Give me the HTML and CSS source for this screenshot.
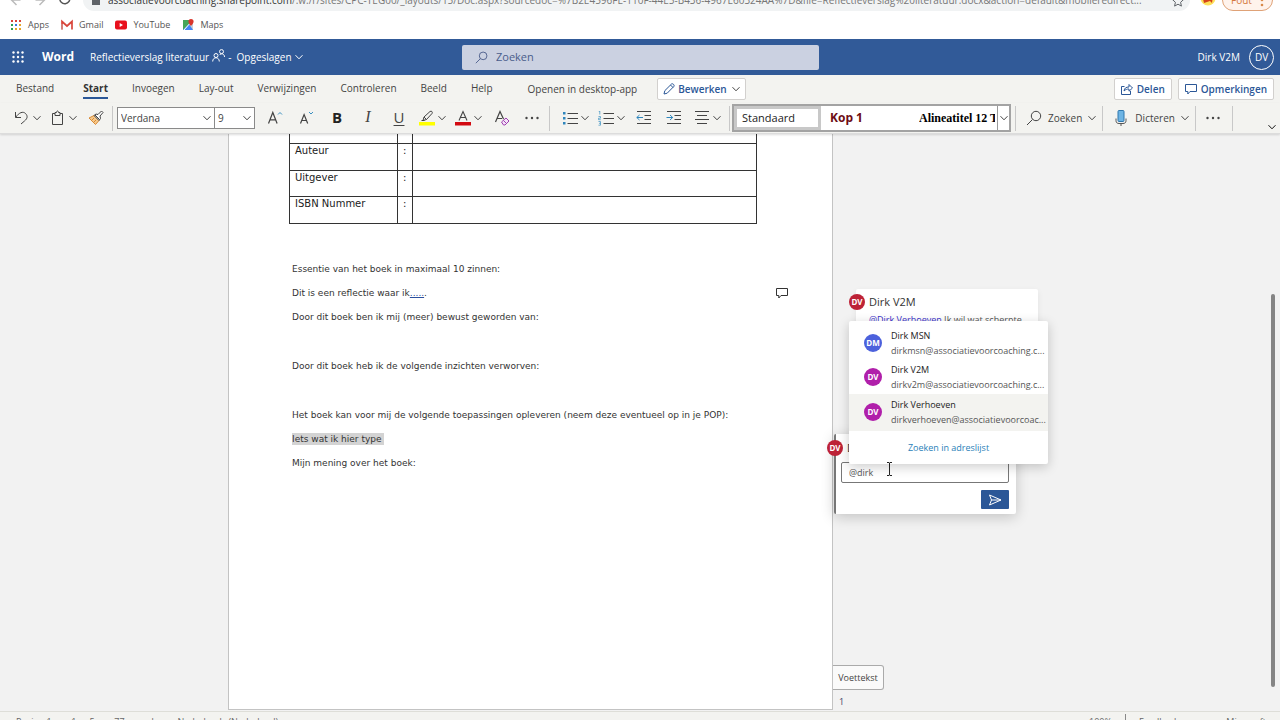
FILE: index.html
```html
<!DOCTYPE html>
<html lang="nl">
<head>
<meta charset="utf-8">
<title>Reflectieverslag literatuur - Word</title>
<link rel="stylesheet" href="styles.css">
</head>
<body>
<svg class="defs" aria-hidden="true">
  <symbol id="chev" viewBox="0 0 8 8"><path d="M.5 2.2 4 5.8 7.5 2.2" fill="none" stroke="currentColor"/></symbol>
  <symbol id="bubble" viewBox="0 0 12 12"><path d="M.5 1.5h11v7H5L2.8 11V8.500H.5z" fill="none" stroke="currentColor"/></symbol>
  <symbol id="lens" viewBox="0 0 16 16"><g fill="none" stroke="currentColor"><circle cx="10" cy="6" r="4.700"/><path d="M6.500 9.500 1 15"/></g></symbol>
  <symbol id="dots" viewBox="0 0 16 4"><g fill="currentColor"><circle cx="2.500" cy="2" r="1.200"/><circle cx="8" cy="2" r="1.200"/><circle cx="13.500" cy="2" r="1.200"/></g></symbol>
</svg>

<div class="browser">
  <div class="address-row">
    <svg class="nav-icon" viewBox="0 0 60 14"><g fill="none" stroke-width="1.500"><path d="M10 7H1M5 2 1 7l5 5" stroke="#bbb"/><path d="M25 7h9M30 2l4 5-5 5" stroke="#bbb"/><path d="M59 4a5 5 0 1 1-3-3" stroke="#555"/></g></svg>
    <div class="address">
      <svg class="lock" viewBox="0 0 8 10"><path d="M0 4h8v6H0zM2 4V1h4v3" fill="#5f6368"/></svg>
      <span class="url"><b>associatievoorcoaching.sharepoint.com</b>/:w:/r/sites/CPC-TEG00/_layouts/15/Doc.aspx?sourcedoc=%7B2E4596FE-110F-44E5-B436-4967E60324AA%7D&amp;file=Reflectieverslag%20literatuur.docx&amp;action=default&amp;mobileredirect...</span>
      <svg class="star" viewBox="0 0 12 12"><path d="m6 .8 1.600 3.500 3.800.4-2.800 2.600.8 3.800L6 9.200l-3.400 1.900.8-3.800L.6 4.700l3.800-.4z" fill="none" stroke="#5f6368"/></svg>
    </div>
    <svg class="ext" viewBox="0 0 16 14"><circle cx="8" cy="6" r="7.500" fill="#fde05a"/><path d="M2 3l4 3 7-2-1 7-2-2-3 1-3 1z" fill="#d4421a"/></svg>
    <button class="error-btn">Fout<svg viewBox="0 0 4 14"><g fill="#d98a4a"><circle cx="2" cy="2" r="1.300"/><circle cx="2" cy="7" r="1.300"/><circle cx="2" cy="12" r="1.300"/></g></svg></button>
  </div>
  <nav class="bookmarks">
    <a href="#"><svg viewBox="0 0 12 12"><g fill="#d9453a"><path d="M1 1h2v2H1z"/><path d="M5 1h2v2H5zM9 1h2v2H9z"/></g><path d="M1 5h2v2H1zM1 9h2v2H1z" fill="#2f9e4f"/><path d="M5 5h2v2H5z" fill="#3b78e0"/><path d="M9 5h2v2H9zM5 9h2v2H5zM9 9h2v2H9z" fill="#e5a52a"/></svg>Apps</a>
    <a href="#"><svg viewBox="0 0 12 12"><path d="M1 10.500v-8l5 4.500 5-4.500v8" fill="none" stroke="#d9453a" stroke-width="1.700"/><path d="M1 5v5.500" stroke="#c9a0a0" stroke-width="1"/></svg>Gmail</a>
    <a href="#"><svg viewBox="0 0 12 12"><rect y="1.500" width="12" height="9" rx="2" fill="#e8101c"/><path d="M4.700 4v4L8 6z" fill="#fff"/></svg>YouTube</a>
    <a href="#"><svg viewBox="0 0 12 12"><path d="M1 1h10v10H1z" fill="#45a558"/><path d="M1 11 11 2v9z" fill="#c9d0d8"/><path d="M1 11 7 5l4 6z" fill="#4285f4"/><path d="m2 11 8-9" stroke="#fff"/><path d="M9 0a2.600 2.600 0 0 1 2.600 2.600C11.600 4.500 9 7 9 7S6.400 4.500 6.400 2.600A2.600 2.600 0 0 1 9 0z" fill="#d9352b"/></svg>Maps</a>
  </nav>
</div>

<header class="titlebar">
  <button class="waffle" aria-label="Apps"><svg viewBox="0 0 14 14"><g fill="#fff"><circle cx="2.500" cy="2.500" r="1.200"/><circle cx="7" cy="2.500" r="1.200"/><circle cx="11.500" cy="2.500" r="1.200"/><circle cx="2.500" cy="7" r="1.200"/><circle cx="7" cy="7" r="1.200"/><circle cx="11.500" cy="7" r="1.200"/><circle cx="2.500" cy="11.500" r="1.200"/><circle cx="7" cy="11.500" r="1.200"/><circle cx="11.500" cy="11.500" r="1.200"/></g></svg></button>
  <span class="app">Word</span>
  <button class="doc-name">Reflectieverslag literatuur
    <svg class="people" viewBox="0 0 13 13"><g fill="none" stroke="#fff"><circle cx="4" cy="6.500" r="2"/><path d="M.7 12.500C.7 7.500 7.300 7.500 7.300 12.500"/><circle cx="9.500" cy="2.600" r="2"/><path d="M7.500 6C9 4 12.500 4.500 12.500 8"/></g></svg>
    <span>-&nbsp; Opgeslagen</span><svg class="chev"><use href="#chev"/></svg></button>
  <label class="search"><svg><use href="#lens"/></svg><input type="text" placeholder="Zoeken" aria-label="Zoeken"></label>
  <div class="account"><span>Dirk V2M</span><button class="me">DV</button></div>
</header>

<div class="tabs">
  <nav class="tab-list">
    <button>Bestand</button><button class="active">Start</button><button>Invoegen</button><button>Lay-out</button><button>Verwijzingen</button><button>Controleren</button><button>Beeld</button><button>Help</button>
  </nav>
  <button class="open-app">Openen in desktop-app</button>
  <button class="pill bold"><svg viewBox="0 0 12 12"><path d="m1 11 .8-3.300L8.500 1c1-1 3.400 1 2.400 2.400L4.200 10.200zM7.500 2l2.500 2.500" fill="none" stroke="currentColor"/></svg>Bewerken<svg class="chev"><use href="#chev"/></svg></button>
  <div class="tab-actions">
    <button class="pill"><svg viewBox="0 0 12 12"><path d="M3.500 3.500h-3v8h9V8M3 8c.5-3 2-4 5-4V1.500L11.500 5 8 8.200V6C6 6 4.500 6.500 3 8z" fill="none" stroke="currentColor"/></svg>Delen</button>
    <button class="pill"><svg><use href="#bubble"/></svg>Opmerkingen</button>
  </div>
</div>

<div class="toolbar">
  <button class="split" aria-label="Ongedaan maken"><svg class="ico" viewBox="0 0 16 16"><path d="M1.500 2v5.500H7M1.800 7.200C5 2.500 9 1 11.500 3.500s2 5-1 7.500L7 14" fill="none" stroke="currentColor"/></svg><svg class="chev"><use href="#chev"/></svg></button>
  <button class="split" aria-label="Plakken"><svg class="ico" viewBox="0 0 16 16"><path d="M5 3.500H2.500v11h10v-11H10M5 2.500h1.500c0-2 2-2 2 0H10v3H5z" fill="none" stroke="currentColor"/></svg><svg class="chev"><use href="#chev"/></svg></button>
  <button class="tool narrow" aria-label="Opmaak kopiëren"><svg class="ico" viewBox="0 0 16 16"><path d="M1 8 6 5.500l5 5L7.500 14.500z" fill="#f6c98c" stroke="#d98a35"/><path d="M3.500 10.500 6 8M5.500 12.500 8 10" stroke="#d98a35"/><path d="m6 5.500 2-1.500 2 .5L13.500 1 15 2.500 12 6l.5 2.500-1.500 2z" fill="#fff" stroke="#444"/><path d="m7 5 4.500 4.500" stroke="#444"/></svg></button>
  <span class="sep"></span>
  <div class="fonts">
    <label class="combo family"><select aria-label="Lettertype"><option>Verdana</option></select><svg class="chev"><use href="#chev"/></svg></label>
    <label class="combo size"><select aria-label="Tekengrootte"><option>9</option></select><svg class="chev"><use href="#chev"/></svg></label>
  </div>
  <button class="tool" aria-label="Groter"><svg class="ico" viewBox="0 0 16 16"><g fill="none" stroke="currentColor" stroke-width="1.200"><path d="m1.500 13.500 4.300-11 4.300 11M3 9.800h5.600"/></g><path d="m11 4.500 2-2 2 2" fill="none" stroke="#3a8fc0"/></svg></button>
  <button class="tool" aria-label="Kleiner"><svg class="ico" viewBox="0 0 16 16"><g fill="none" stroke="currentColor" stroke-width="1.200"><path d="m2.500 13.500 3.600-9 3.600 9M3.800 10.500h4.600"/></g><path d="m11 2 2 2 2-2" fill="none" stroke="#3a8fc0"/></svg></button>
  <button class="tool letter strong">B</button>
  <button class="tool letter italic">I</button>
  <button class="tool letter under">U</button>
  <button class="split" aria-label="Markeren"><svg class="ico" viewBox="0 0 16 16"><path d="M0 12h16v3.500H0z" fill="#ff0"/><path d="m4 10.500 1-3.500L11 1.500c1.500-1 3 .5 2 2L7.500 9.500zM5 7l2.500 2.500M2.500 10.500h3" fill="none" stroke="currentColor"/></svg><svg class="chev"><use href="#chev"/></svg></button>
  <button class="split" aria-label="Tekstkleur"><svg class="ico" viewBox="0 0 16 16"><path d="M0 12h16v3.500H0z" fill="#d20a11"/><path d="m4 10.500 4-9 4 9M5.200 7.500h5.600" fill="none" stroke="currentColor" stroke-width="1.100"/></svg><svg class="chev"><use href="#chev"/></svg></button>
  <button class="tool" aria-label="Opmaak wissen"><svg class="ico" viewBox="0 0 16 16"><path d="M1.500 12 6 1.500 9.500 9M3 8.500h5" fill="none" stroke="currentColor" stroke-width="1.200"/><path d="m7.500 12 4.500-4 3 3-4 4H9.500zM9.500 10.500l3 3" fill="#f4e3f8" stroke="#a040b0"/></svg></button>
  <button class="tool narrow" aria-label="Meer"><svg class="more"><use href="#dots"/></svg></button>
  <span class="sep wide"></span>
  <button class="split" aria-label="Opsommingstekens"><svg class="ico" viewBox="0 0 16 16"><path d="M5.500 3.500H16M5.500 8.500H16M5.500 13.500H16" stroke="currentColor"/><path d="M1 2h2.500v2.500H1zM1 7h2.500v2.500H1zM1 12h2.500v2.500H1z" fill="#2f86bd"/></svg><svg class="chev"><use href="#chev"/></svg></button>
  <button class="split" aria-label="Nummering"><svg class="ico" viewBox="0 0 16 16"><path d="M5.500 3.500H16M5.500 8.500H16M5.500 13.500H16" stroke="currentColor"/><path d="m.8 2 1-1v3.500M.5 6.500h2v1.700h-2v1.500h2.300M.5 11.500h2v3.700h-2M1 13.300h1.500" fill="none" stroke="#4d9bc8" stroke-width=".8"/></svg><svg class="chev"><use href="#chev"/></svg></button>
  <button class="tool narrow" aria-label="Inspringing verkleinen"><svg class="ico" viewBox="0 0 16 16"><path d="M1 1.500h14M8.500 5.500H15M8.500 9.500H15M1 13.500h14" stroke="currentColor"/><path d="M7 7.500H.8M3.500 5 .8 7.500 3.500 10" fill="none" stroke="#2f86bd"/></svg></button>
  <button class="tool" aria-label="Inspringing vergroten"><svg class="ico" viewBox="0 0 16 16"><path d="M1 1.500h14M8.500 5.500H15M8.500 9.500H15M1 13.500h14" stroke="currentColor"/><path d="M.5 7.500h6.200M4 5l2.700 2.500L4 10" fill="none" stroke="#2f86bd"/></svg></button>
  <button class="split" aria-label="Uitlijnen"><svg class="ico" viewBox="0 0 16 16"><path d="M1 1.500h14M3 5.500h10M1 9.500h14M3 13.500h10" stroke="currentColor"/></svg><svg class="chev"><use href="#chev"/></svg></button>
  <span class="sep spaced"></span>
  <div class="gallery">
    <button class="style-normal">Standaard</button>
    <button class="style-head">Kop 1</button>
    <button class="style-title">Alineatitel 12 TNR</button>
    <button class="gallery-more" aria-label="Meer stijlen"><svg class="chev"><use href="#chev"/></svg></button>
  </div>
  <span class="sep spaced"></span>
  <button class="text-tool"><svg class="ico"><use href="#lens"/></svg>Zoeken<svg class="chev"><use href="#chev"/></svg></button>
  <span class="sep"></span>
  <button class="text-tool"><svg class="ico" viewBox="0 0 16 16"><rect x="5" y=".5" width="6" height="11" rx="1" fill="#6db4e4" stroke="#2f77ad"/><path d="M3 8.500v2c0 2 1 3 3 3h4c2 0 3-1 3-3v-2M8 13.500V16" fill="none" stroke="#555"/></svg>Dicteren<svg class="chev"><use href="#chev"/></svg></button>
  <span class="sep"></span>
  <button class="tool" aria-label="Meer opties"><svg class="more"><use href="#dots"/></svg></button>
  <span class="sep spaced"></span>
  <button class="collapse" aria-label="Lint"><svg class="chev"><use href="#chev"/></svg></button>
</div>

<main class="workspace">
  <article class="page">
    <table>
      <tr><th></th><td></td><td></td></tr>
      <tr><th>Auteur</th><td>:</td><td></td></tr>
      <tr><th>Uitgever</th><td>:</td><td></td></tr>
      <tr><th>ISBN Nummer</th><td>:</td><td></td></tr>
    </table>
    <div class="prose">
      <p>Essentie van het boek in maximaal 10 zinnen:</p>
      <p class="noted"><span>Dit is een reflectie waar ik<u>.....</u>.</span><svg class="note"><use href="#bubble"/></svg></p>
      <p>Door dit boek ben ik mij (meer) bewust geworden van:</p>
      <p class="blank"></p>
      <p>Door dit boek heb ik de volgende inzichten verworven:</p>
      <p class="blank"></p>
      <p>Het boek kan voor mij de volgende toepassingen opleveren (neem deze eventueel op in je POP):</p>
      <p><mark>Iets wat ik hier type</mark></p>
      <p>Mijn mening over het boek:</p>
    </div>
  </article>
  <aside class="side">
    <section class="card first">
      <span class="avatar red">DV</span>
      <div><h2>Dirk V2M</h2><p><a href="#">@Dirk Verhoeven</a> Ik wil wat scherpte</p></div>
    </section>
    <section class="card second">
      <div class="card-head"><span class="avatar red">DV</span><h2>Dirk V2M</h2></div>
      <input type="text" value="@dirk" aria-label="Opmerking">
      <button class="send" aria-label="Verzenden"><svg viewBox="0 0 14 12"><path d="M1.500 1 13 6 1.500 11l2-5zM3.500 6H13" fill="none" stroke="#fff"/></svg></button>
    </section>
    <div class="suggest">
      <button class="person"><span class="avatar blue">DM</span><span class="who"><strong>Dirk MSN</strong><span>dirkmsn@associatievoorcoaching.c...</span></span></button>
      <button class="person"><span class="avatar purple">DV</span><span class="who"><strong>Dirk V2M</strong><span>dirkv2m@associatievoorcoaching.c...</span></span></button>
      <button class="person hover"><span class="avatar purple">DV</span><span class="who"><strong>Dirk Verhoeven</strong><span>dirkverhoeven@associatievoorcoac...</span></span></button>
      <a class="lookup" href="#">Zoeken in adreslijst</a>
    </div>
    <svg class="caret" viewBox="0 0 7 14"><path d="M1 .5h2l.5.5.5-.5h2M3.500 1v12M1 13.500h2l.5-.5.5.5h2" fill="none" stroke="#222"/></svg>
    <div class="footer-tag"><button>Voettekst</button><span>1</span></div>
  </aside>
  <div class="scroll-thumb"></div>
</main>

<footer class="status">
  <div><span>Pagina 1 van 1</span><span>5 van 77 woorden</span><span>Nederlands (Nederland)</span></div>
  <div><span>100%</span><i></i><span>Feedback geven aan Microsoft</span></div>
</footer>
</body>
</html>
```
FILE: styles.css
```css
* { box-sizing: border-box; }
body {
  margin: 0; height: 100vh; overflow: hidden;
  display: flex; flex-direction: column;
  font: 10px/16px "Open Sans", "Noto Sans", sans-serif;
  color: #444; background: #f2f2f2;
}
button, input, select {
  font: inherit; color: inherit; background: none; border: 0;
  padding: 0; margin: 0; border-radius: 0; outline: 0; white-space: nowrap;
}
button { display: flex; align-items: center; justify-content: center; flex: none; }
a { text-decoration: none; color: inherit; }
svg { flex: none; display: block; }
h2, p { margin: 0; font-weight: 400; }
.defs { position: absolute; width: 0; height: 0; }
.chev { width: 8px; height: 8px; }

.browser { background: #fff; flex: none; }
.address-row { height: 11px; overflow: hidden; display: flex; align-items: flex-end; padding: 0 7px 0 10px; }
.nav-icon { width: 61px; height: 14px; margin-bottom: 4px; }
.address {
  flex: 1; min-width: 0; height: 22px; margin-left: 12px; padding: 0 6px 0 9px;
  background: #f1f3f4; border-radius: 11px; display: flex; align-items: center; color: #777;
}
.lock { width: 8px; height: 10px; margin-right: 8px; }
.url { flex: 1; min-width: 0; overflow: hidden; white-space: nowrap; }
.url b { font-weight: 400; color: #333; }
.star { width: 12px; height: 12px; margin: 2px 0 0 12px; }
.ext { width: 16px; height: 14px; margin: 0 6px 5px 10px; }
.error-btn {
  width: 51px; height: 22px; gap: 8px; color: #d5793c;
  border: 1px solid #dfa277; border-radius: 11px; background: #fff3ec;
}
.error-btn svg { width: 4px; height: 14px; }
.bookmarks { height: 28px; display: flex; align-items: center; gap: 12px; padding: 0 10px 1px; font-size: 9px; color: #555; }
.bookmarks a { display: flex; align-items: center; gap: 6px; }
.bookmarks svg { width: 12px; height: 12px; }

.titlebar { height: 36px; flex: none; background: #315a98; color: #fff; display: grid; grid-template-columns: 36px 54px 372px minmax(100px, 357px) 1fr; align-items: center; }
.waffle svg { width: 14px; height: 14px; }
.app { font-size: 12px; font-weight: 700; padding-left: 6px; }
.doc-name { justify-content: flex-start; gap: 3px; }
.people { width: 13px; height: 13px; margin-bottom: 4px; }
.search { height: 25px; display: flex; align-items: center; gap: 8px; padding: 0 13px; background: #cbd1e1; border-radius: 2px; color: #3c4f80; }
.search svg { width: 13px; height: 13px; }
.search input { flex: 1; min-width: 0; font-size: 11px; }
.search input::placeholder { color: #4a5d8b; opacity: 1; }
.account { display: flex; justify-content: flex-end; align-items: center; gap: 9px; padding-right: 6px; }
.me { width: 25px; height: 25px; border: 1px solid #fff; border-radius: 50%; }

.tabs { height: 28px; flex: none; background: #f3f3f0; display: flex; align-items: flex-start; padding: 3px 6px 0 16px; }
.tab-list { display: flex; gap: 24px; }
.tab-list button { height: 21px; padding-bottom: 2px; }
.tab-list .active { margin-left: 5px; font-weight: 700; color: #333; border-bottom: 2px solid #2b5797; padding-bottom: 0; }
.open-app { margin: 3px 20px 0 35px; }
.pill { height: 22px; padding: 0 6px; gap: 4px; background: #fff; border: 1px solid #d2d0ce; border-radius: 2px; color: #2b5797; font-weight: 600; }
.pill.bold { padding: 0 5px; gap: 3px; }
.pill svg { width: 12px; height: 12px; }
.pill .chev { width: 8px; height: 8px; margin-left: 2px; color: #444; }
.tab-actions { margin-left: auto; display: flex; gap: 6px; }

.toolbar { height: 31px; flex: none; background: #f3f3f0; display: flex; align-items: center; gap: 1px; padding: 0 4px 0 10px; border-bottom: 1px solid #dcdcdc; box-shadow: 0 1px 2px #0002; z-index: 1; }
.ico { width: 16px; height: 16px; }
.split { width: 35px; gap: 3px; }
.tool { width: 30px; height: 28px; }
.tool.narrow { width: 28px; }
.more { width: 16px; height: 4px; }
.sep { width: 1px; height: 25px; margin: 0 1px; background: #c8c8c8; flex: none; }
.sep.wide { margin: 0 7px 0 2px; }
.sep.spaced { margin: 0 1px 0 3px; }
.fonts { display: flex; height: 22px; margin: 0 4px 0 2px; flex: none; }
.combo { display: flex; align-items: center; border: 1px solid #8a8a8a; background: #fff; padding: 0 3px; }
.combo select { flex: 1; min-width: 0; appearance: none; }
.family { width: 98px; }
.size { width: 40px; border-left: 0; padding-left: 3px; }
.letter { font-size: 15px; padding-bottom: 2px; }
.strong { font-weight: 700; color: #222; }
.italic { font-family: "Liberation Serif", serif; font-style: italic; font-size: 16px; }
.under { text-decoration: underline; text-underline-offset: 2px; text-decoration-thickness: 1px; }
.gallery { width: 279px; height: 28px; flex: 0 1 auto; min-width: 100px; display: flex; border: 2px solid #a3a3a3; background: #fff; overflow: hidden; color: #222; }
.style-normal { width: 87px; border: 3px solid #c8c8c8; font-size: 11px; justify-content: flex-start; padding-left: 5px; }
.style-head { width: 98px; justify-content: flex-start; padding-left: 9px; font-size: 12px; font-weight: 700; color: #6d0c14; }
.style-title { flex: 1; min-width: 0; overflow: hidden; justify-content: flex-start; font: bold 12px/16px "Liberation Serif", serif; color: #000; }
.gallery-more { width: 12px; margin-left: 2px; border-left: 1px solid #999; color: #444; }
.text-tool { padding: 0 4px 0 8px; gap: 6px; }
.collapse { margin: 18px 0 0 auto; color: #111; }

.workspace { position: relative; flex: 1; min-height: 0; display: grid; grid-template-columns: 228fr 605fr 447fr; padding-bottom: 1px; }
.page { grid-column: 2; background: #fff; border: 1px solid #c3c3c3; border-top: 0; overflow: hidden; font-family: "DejaVu Sans", sans-serif; font-size: 9px; color: #333; padding: 0 60px; }
.page table { width: calc(100% - 15px); border-collapse: collapse; table-layout: fixed; color: #222; font-size: 10px; }
.page th, .page td { border: 1px solid #333; border-top: 0; height: 27px; padding: 0 5px; line-height: 14px; font-weight: 400; text-align: left; vertical-align: top; }
.page tr:first-child > * { height: 9px; }
.page tr:nth-child(3) > * { height: 26px; }
.page th { width: 108px; }
.page td:nth-child(2) { width: 15px; }
.prose { padding: 33px 0 0 3px; }
.prose p { line-height: 24px; white-space: nowrap; }
.prose .blank { height: 25px; }
.noted { display: flex; justify-content: space-between; align-items: center; }
.prose u { color: #2b4f9e; }
.note { width: 12px; height: 12px; margin-right: -16px; color: #333; }
.prose mark { background: #d3d3d3; color: inherit; padding: 1px 2px 1px 0; }

.side { position: relative; padding-top: 155px; font-size: 9px; }
.card { background: #fff; width: 182px; box-shadow: 0 2px 6px #0001; border-radius: 2px; }
.card h2 { font-size: 11px; color: #333; }
.avatar { display: flex; align-items: center; justify-content: center; flex: none; border-radius: 50%; color: #fff; font: bold 8px/16px "Open Sans", sans-serif; width: 16px; height: 16px; }
.red { background: #bd2237; }
.card.first { display: flex; gap: 4px; margin-left: 23px; height: 100px; padding-top: 5px; }
.card .avatar { margin-left: -7px; }
.card.first h2 { line-height: 16px; margin-bottom: 2px; }
.card.first p { line-height: 16px; white-space: nowrap; color: #555; }
.card.first a { color: #3a2fc8; }
.card.second { margin: 45px 0 0 1px; height: 80px; border-left: 2px solid #777; padding: 6px 7px 5px 5px; display: flex; flex-direction: column; box-shadow: 0 3px 14px #0003; }
.card-head { display: flex; gap: 4px; }
.second .card-head .avatar { margin-left: -14px; }
.second input { width: 168px; height: 21px; flex: none; margin-top: 6px; border: 1px solid #777; border-radius: 2px; padding: 0 7px 1px; color: #555; }
.send { width: 28px; height: 19px; margin: 7px 0 0 auto; background: #2b5797; border-radius: 1px; }
.send svg { width: 14px; height: 12px; }
.suggest { position: absolute; left: 16px; top: 187px; width: 199px; background: #fff; border-radius: 2px; box-shadow: 0 3px 12px #0003; padding-top: 5px; }
.person { width: 100%; height: 34px; justify-content: flex-start; gap: 9px; padding-left: 15px; text-align: left; }
.person.hover { background: #f3f3f0; height: 37px; padding-bottom: 2px; }
.person .avatar { width: 18px; height: 18px; }
.who { display: flex; flex-direction: column; line-height: 15px; }
.who strong { font-weight: 500; color: #222; }
.who span { color: #555; }
.blue { background: #4c61dc; }
.purple { background: #b01faa; }
.lookup { display: block; text-align: center; line-height: 33px; color: #2a7fb8; }
.caret { position: absolute; left: 53px; top: 328px; width: 7px; height: 14px; }
.footer-tag { position: absolute; left: 0; bottom: 0; }
.footer-tag button { width: 51px; height: 25px; background: #fafafa; border: 1px solid #aaa; border-left: 0; border-radius: 0 3px 3px 0; }
.footer-tag span { display: block; padding: 4px 6px 0; color: #446; }
.scroll-thumb { position: absolute; right: 5px; top: 160px; bottom: 24px; width: 4px; border-radius: 2px; background: #858585; }

.status { height: 9px; flex: none; overflow: hidden; background: #f3f3f0; border-top: 1px solid #deded8; display: flex; justify-content: space-between; padding: 2px 14px 0 16px; font-size: 9px; line-height: 16px; color: #666; }
.status div { display: flex; gap: 13px; white-space: nowrap; }
.status i { width: 1px; background: #888; }
```
